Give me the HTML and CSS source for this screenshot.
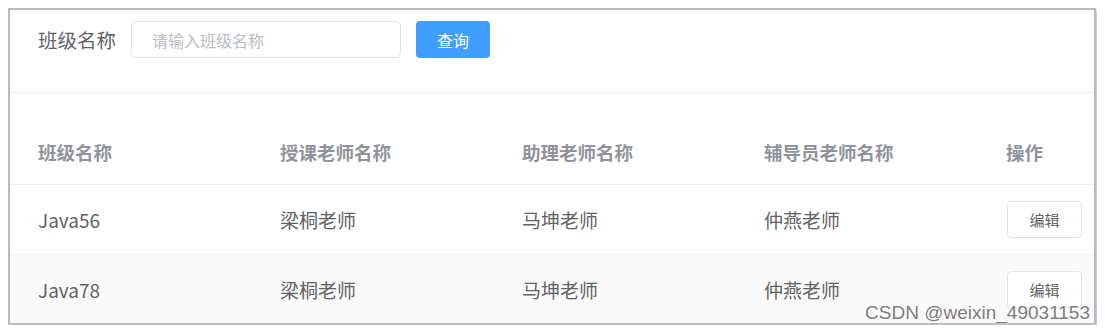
FILE: index.html
```html
<!DOCTYPE html>
<html lang="zh-CN">
<head>
    <meta charset="UTF-8">
    <meta name="viewport" content="width=device-width, initial-scale=1.0">
    <title>班级管理</title>
    <link rel="stylesheet" href="styles.css">
</head>
<body>
    <div class="panel">
        <form class="search-bar">
            <label class="search-label" for="className">班级名称</label>
            <input type="text" id="className" class="search-input" placeholder="请输入班级名称">
            <button type="button" class="btn-primary">查询</button>
        </form>

        <table class="class-table">
            <colgroup>
                <col class="col-data">
                <col class="col-data">
                <col class="col-data">
                <col class="col-data">
                <col>
            </colgroup>
            <thead>
                <tr>
                    <th>班级名称</th>
                    <th>授课老师名称</th>
                    <th>助理老师名称</th>
                    <th>辅导员老师名称</th>
                    <th>操作</th>
                </tr>
            </thead>
            <tbody>
                <tr>
                    <td>Java56</td>
                    <td>梁桐老师</td>
                    <td>马坤老师</td>
                    <td>仲燕老师</td>
                    <td><button type="button" class="btn-default">编辑</button></td>
                </tr>
                <tr class="striped">
                    <td>Java78</td>
                    <td>梁桐老师</td>
                    <td>马坤老师</td>
                    <td>仲燕老师</td>
                    <td><button type="button" class="btn-default">编辑</button></td>
                </tr>
            </tbody>
        </table>
    </div>

    <div class="watermark">CSDN @weixin_49031153</div>
</body>
</html>
```

FILE: styles.css
```css
body {
    margin: 8px;
    background: #ffffff;
    font-family: "Noto Sans CJK SC", "Noto Sans", sans-serif;
    overflow: hidden;
}
.panel {
    width: 1084px;
    height: 313px;
    border: 2px solid #bcbcbc;
    box-shadow: 3px 3px 3px rgba(0, 0, 0, 0.22);
    background: #fff;
    overflow: hidden;
}
.search-bar {
    display: flex;
    align-items: center;
    box-sizing: border-box;
    height: 83px;
    padding-left: 28px;
    padding-bottom: 23px;
    margin: 0;
    border-bottom: 1px solid #eef0f5;
}
.search-label {
    font-size: 19.5px;
    color: #5f6266;
    margin-right: 15px;
    line-height: 1;
}
.search-input {
    width: 270px;
    height: 37px;
    box-sizing: border-box;
    border: 1px solid #e1e4ea;
    border-radius: 5px;
    padding: 0 20px;
    font-family: inherit;
    font-size: 16px;
    outline: none;
}
.search-input::placeholder {
    color: #b9bcc3;
}
.btn-primary {
    margin-left: 15px;
    width: 74px;
    height: 37px;
    border: none;
    border-radius: 4px;
    background: #409eff;
    color: #fff;
    font-family: inherit;
    font-size: 16px;
    cursor: pointer;
}
.class-table {
    width: 100%;
    border-collapse: collapse;
    table-layout: fixed;
    margin-top: 27px;
}
.class-table .col-data {
    width: 242px;
}
.class-table th,
.class-table td {
    padding: 0 0 0 28px;
    text-align: left;
    font-size: 19px;
    line-height: 1;
    border-bottom: 1px solid #eef0f5;
}
.class-table th {
    height: 64px;
    font-size: 18.5px;
    color: #909399;
    font-weight: bold;
    box-sizing: border-box;
}
.class-table td {
    height: 69px;
    color: #606266;
}
.striped td {
    background: #fafafa;
}
.btn-default {
    width: 75px;
    height: 37px;
    border: 1px solid #dfe2e8;
    border-radius: 4px;
    background: #fff;
    color: #606266;
    font-family: inherit;
    font-size: 15px;
    margin-left: 1px;
    cursor: pointer;
}
.watermark {
    position: absolute;
    right: 15px;
    top: 302px;
    font-family: "Liberation Sans", Arial, sans-serif;
    font-size: 19px;
    color: #7c7c7c;
    text-shadow: 0 0 2px #fff, 0 0 2px #fff;
    line-height: 22px;
}
```
